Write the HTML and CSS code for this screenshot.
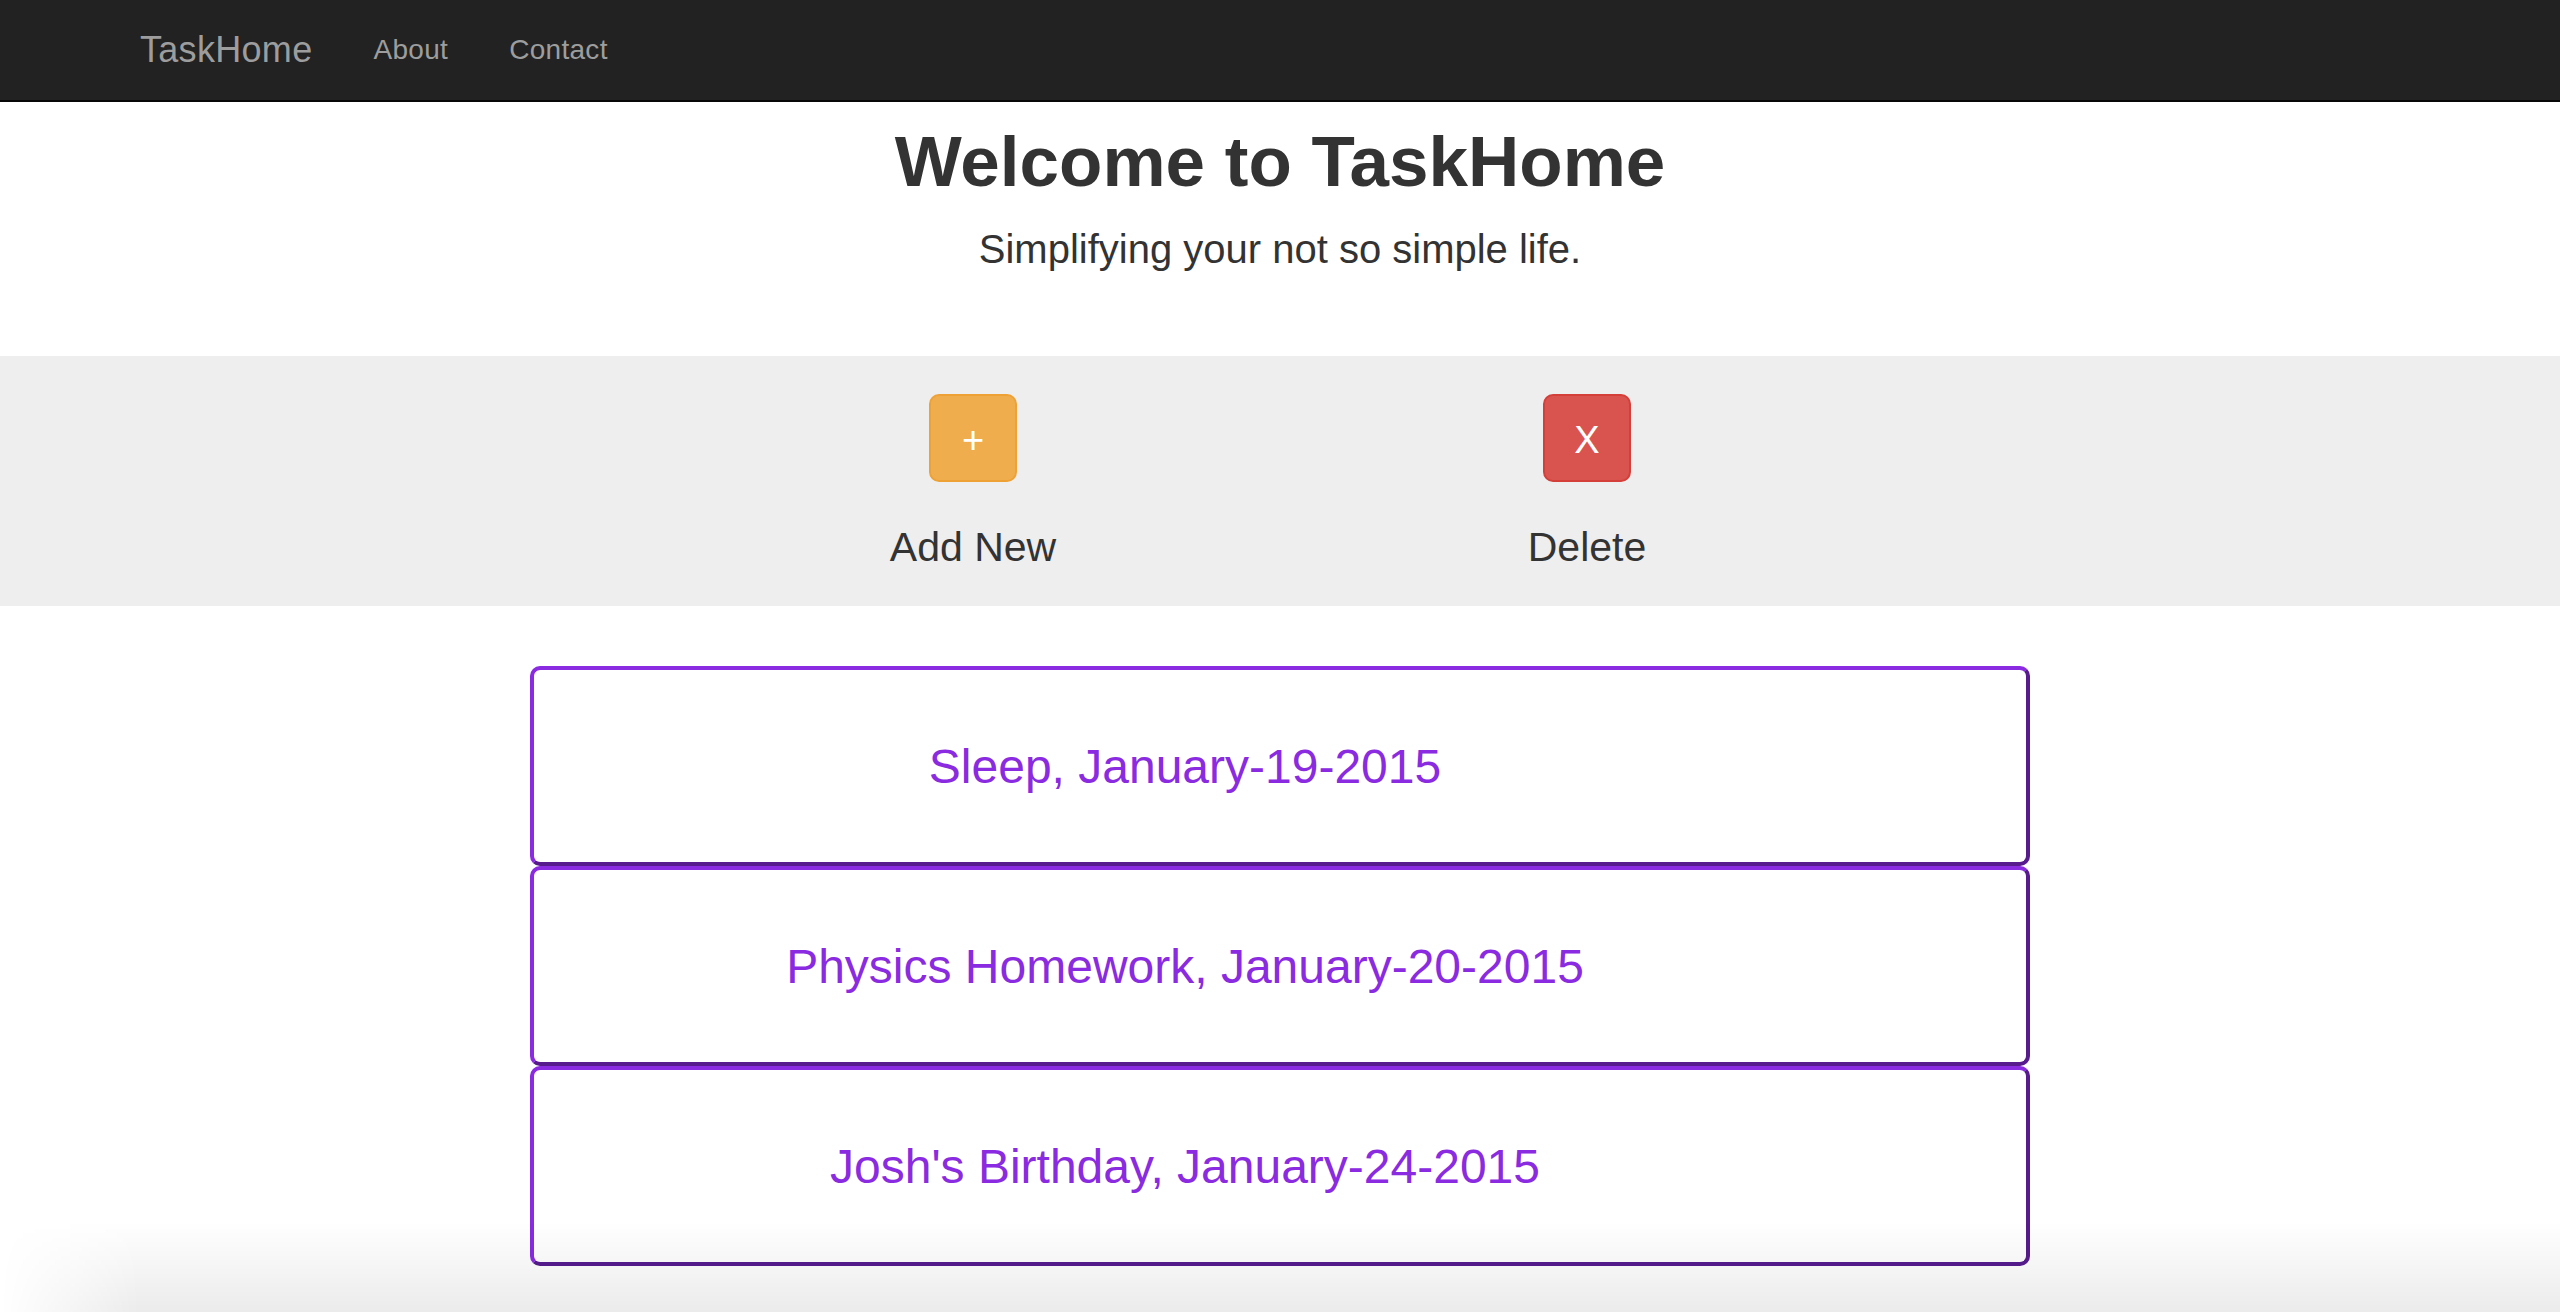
FILE: index.html
```html
<!DOCTYPE html>
<html lang="en">
<head>
<meta charset="utf-8">
<title>TaskHome</title>
<link rel="stylesheet" href="styles.css">
</head>
<body>
<nav class="navbar">
  <div class="nav-inner">
    <a class="brand" href="#">TaskHome</a>
    <ul class="nav-links">
      <li><a href="#">About</a></li>
      <li><a href="#">Contact</a></li>
    </ul>
  </div>
</nav>
<header class="hero">
  <h1 class="hero-title">Welcome to TaskHome</h1>
  <p class="lead">Simplifying your not so simple life.</p>
</header>
<section class="actions">
  <div class="action">
    <button class="btn btn-add" type="button">+</button>
    <p class="action-label">Add New</p>
  </div>
  <div class="action">
    <button class="btn btn-delete" type="button">X</button>
    <p class="action-label">Delete</p>
  </div>
</section>
<main class="tasks">
  <div class="task">Sleep, January-19-2015</div>
  <div class="task">Physics Homework, January-20-2015</div>
  <div class="task">Josh's Birthday, January-24-2015</div>
</main>
<div class="bottom-shade"></div>
</body>
</html>
```
FILE: styles.css
```css
html, body {
  margin: 0;
  padding: 0;
}
body {
  font-family: "Liberation Sans", Arial, Helvetica, sans-serif;
  color: #333;
  background: #fff;
}

/* Navbar */
.navbar {
  background: #222;
  border-bottom: 2px solid #080808;
  height: 100px;
}
.nav-inner {
  width: 2340px;
  height: 100px;
  margin: 0 auto;
  padding: 0 30px;
  box-sizing: border-box;
  display: flex;
  align-items: center;
}
.brand {
  font-size: 36px;
  line-height: 100px;
  color: #9d9d9d;
  text-decoration: none;
  padding-right: 31px;
  letter-spacing: 0.3px;
}
.nav-links {
  list-style: none;
  display: flex;
  margin: 0;
  padding: 0;
}
.nav-links a {
  display: block;
  padding: 0 31px 0 30px;
  font-size: 28px;
  line-height: 100px;
  color: #9d9d9d;
  text-decoration: none;
  letter-spacing: 0.3px;
}

/* Hero */
.hero {
  text-align: center;
  padding-bottom: 79px;
}
.hero-title {
  margin: 20px 0 0;
  font-size: 71px;
  line-height: 79px;
  font-weight: 700;
  color: #333;
}
.lead {
  margin: 20px 0 0;
  font-size: 40px;
  line-height: 56px;
  font-weight: 400;
  color: #333;
}

/* Actions band */
.actions {
  background: #eee;
  display: flex;
  justify-content: center;
  padding: 38px 0 36px;
}
.action {
  width: 614px;
  display: flex;
  flex-direction: column;
  align-items: center;
}
.btn {
  width: 88px;
  height: 88px;
  box-sizing: border-box;
  border: 2px solid;
  border-radius: 10px;
  color: #fff;
  font-family: "Liberation Sans", Arial, sans-serif;
  font-size: 38px;
  line-height: 1;
  padding: 4px 0 0;
  display: flex;
  align-items: center;
  justify-content: center;
}
.btn-add {
  background: #f0ad4e;
  border-color: #eea236;
}
.btn-delete {
  background: #d9534f;
  border-color: #d43f3a;
}
.action-label {
  margin: 42px 0 0;
  font-size: 41px;
  line-height: 46px;
  color: #333;
}

/* Tasks */
.tasks {
  width: 1500px;
  margin: 60px auto 0;
}
.task {
  height: 200px;
  box-sizing: border-box;
  border: 4px solid;
  border-color: #8a2be2 #571b8e #571b8e #8a2be2;
  border-radius: 10px;
  display: flex;
  align-items: center;
  justify-content: center;
  padding-right: 190px;
  font-size: 48px;
  color: #8a2be2;
  background: #fff;
}

/* Window shade at bottom of screenshot */
.bottom-shade {
  position: fixed;
  left: 0;
  right: 0;
  bottom: 0;
  height: 90px;
  pointer-events: none;
  background: linear-gradient(to bottom, rgba(0, 0, 0, 0), rgba(0, 0, 0, 0.08));
  -webkit-mask-image: linear-gradient(to right, transparent 0, #000 140px);
  mask-image: linear-gradient(to right, transparent 0, #000 140px);
}
```
